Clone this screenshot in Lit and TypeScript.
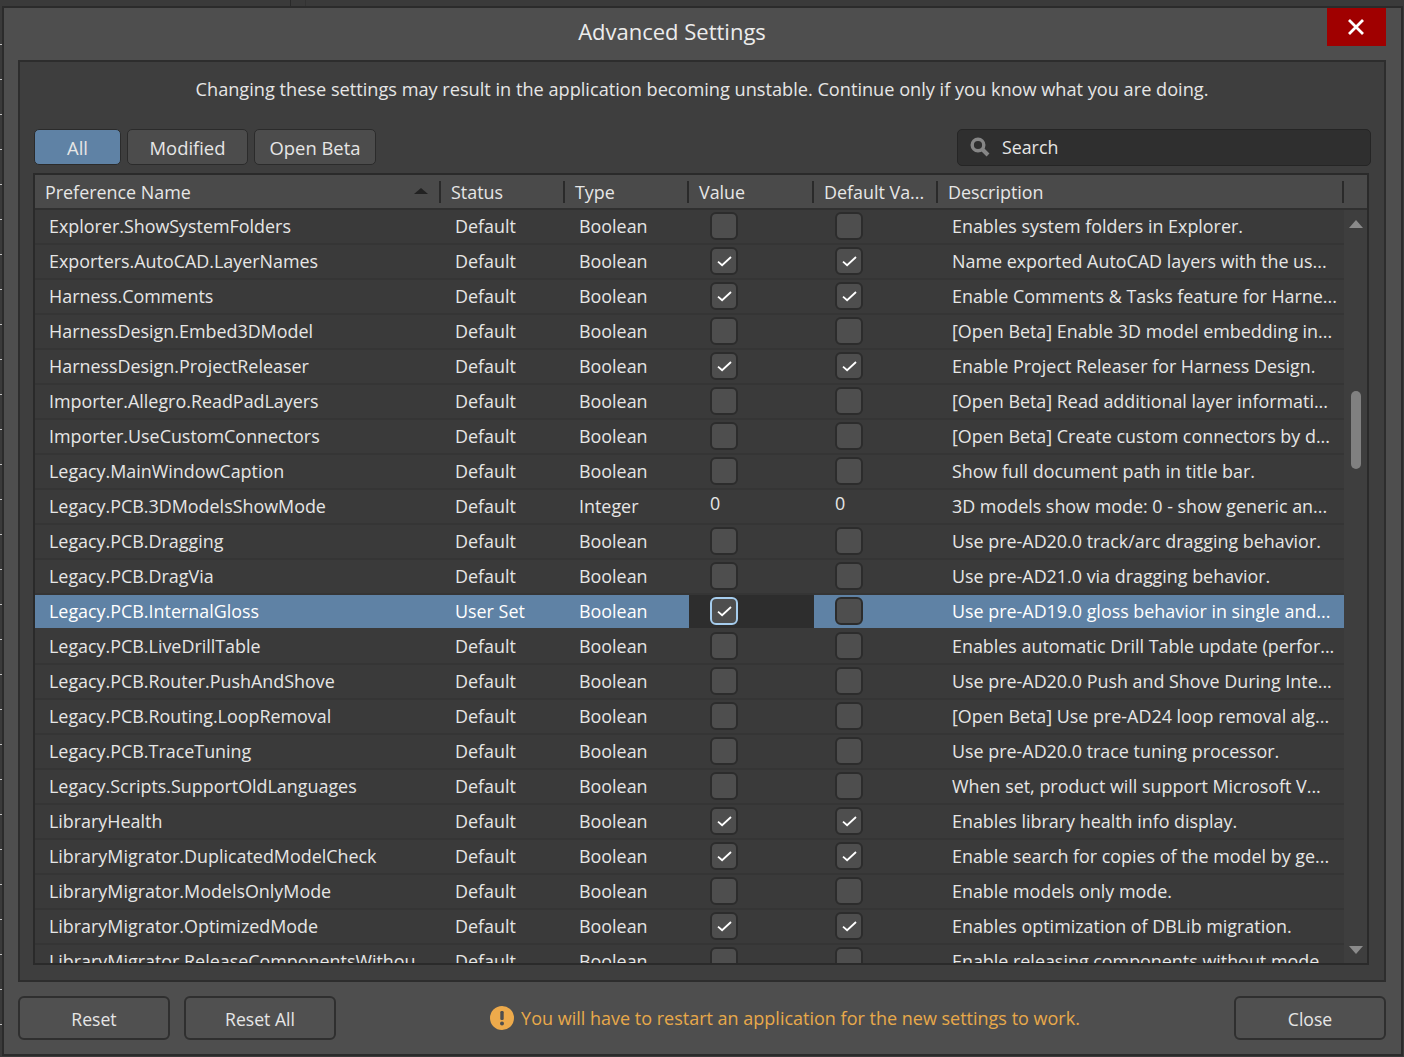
import { LitElement, html, css, svg } from "lit";
import { customElement } from "lit/decorators.js";

type Row = [string, string, string, string, string];
const B = "Boolean";
const rows: Row[] = [
  ["Explorer.ShowSystemFolders", "Default", B, "0", "Enables system folders in Explorer."],
  ["Exporters.AutoCAD.LayerNames", "Default", B, "1", "Name exported AutoCAD layers with the us..."],
  ["Harness.Comments", "Default", B, "1", "Enable Comments & Tasks feature for Harne..."],
  ["HarnessDesign.Embed3DModel", "Default", B, "0", "[Open Beta] Enable 3D model embedding in..."],
  ["HarnessDesign.ProjectReleaser", "Default", B, "1", "Enable Project Releaser for Harness Design."],
  ["Importer.Allegro.ReadPadLayers", "Default", B, "0", "[Open Beta] Read additional layer informati..."],
  ["Importer.UseCustomConnectors", "Default", B, "0", "[Open Beta] Create custom connectors by d..."],
  ["Legacy.MainWindowCaption", "Default", B, "0", "Show full document path in title bar."],
  ["Legacy.PCB.3DModelsShowMode", "Default", "Integer", "n", "3D models show mode: 0 - show generic an..."],
  ["Legacy.PCB.Dragging", "Default", B, "0", "Use pre-AD20.0 track/arc dragging behavior."],
  ["Legacy.PCB.DragVia", "Default", B, "0", "Use pre-AD21.0 via dragging behavior."],
  ["Legacy.PCB.InternalGloss", "User Set", B, "s", "Use pre-AD19.0 gloss behavior in single and..."],
  ["Legacy.PCB.LiveDrillTable", "Default", B, "0", "Enables automatic Drill Table update (perfor..."],
  ["Legacy.PCB.Router.PushAndShove", "Default", B, "0", "Use pre-AD20.0 Push and Shove During Inte..."],
  ["Legacy.PCB.Routing.LoopRemoval", "Default", B, "0", "[Open Beta] Use pre-AD24 loop removal alg..."],
  ["Legacy.PCB.TraceTuning", "Default", B, "0", "Use pre-AD20.0 trace tuning processor."],
  ["Legacy.Scripts.SupportOldLanguages", "Default", B, "0", "When set, product will support Microsoft V..."],
  ["LibraryHealth", "Default", B, "1", "Enables library health info display."],
  ["LibraryMigrator.DuplicatedModelCheck", "Default", B, "1", "Enable search for copies of the model by ge..."],
  ["LibraryMigrator.ModelsOnlyMode", "Default", B, "0", "Enable models only mode."],
  ["LibraryMigrator.OptimizedMode", "Default", B, "1", "Enables optimization of DBLib migration."],
  ["LibraryMigrator.ReleaseComponentsWithou", "Default", B, "0", "Enable releasing components without mode..."],
];

const check = svg`<svg class="tick" width="15" height="11" viewBox="0 0 15 11"><path d="M1 5.6 L5.1 9.2 L14 1" fill="none" stroke="#fff" stroke-width="1.8"/></svg>`;

@customElement("app-root")
export class AppRoot extends LitElement {
  static styles = css`
    :host { display: block; height: 1057px; overflow: hidden; background: #3a3a3a; font-family: "Open Sans", "Noto Sans", sans-serif; font-size: 17.9px; color: #e6e6e6; }
    * { box-sizing: border-box; }
    .screen { height: 1057px; padding: 6px 1px 1px 2px; background:
      linear-gradient(to right, transparent 290px, #2a2a2a 290px, #2a2a2a 291px, transparent 291px, transparent 305px, #333 305px, #333 306px, transparent 306px) top / 100% 6px no-repeat,
      repeating-linear-gradient(to bottom, transparent 0, transparent 34px, #c4c4c4 34px, #c4c4c4 35px) left 0 top 10px / 2px 100% no-repeat; }
    .dialog { height: 1050px; background: #4e4e4e; border: 2px solid #2b2b2b; padding: 0 15px 0 14px; display: flex; flex-direction: column; position: relative; }
    .title { height: 52px; flex: none; display: flex; align-items: center; justify-content: center; font-size: 22px; color: #ececec; padding: 0 60px 7px 0; }
    .close { position: absolute; top: 0; right: 15px; width: 59px; height: 38px; background: #a00000; display: flex; align-items: center; justify-content: center; padding-right: 2px; }
    .panel { flex: none; height: 922px; background: #3e3e3e; border: 2px solid #2d2d2d; padding: 0 13px 0 13px; display: flex; flex-direction: column; }
    .warn { height: 56px; flex: none; display: flex; align-items: center; justify-content: center; padding-bottom: 2px; font-size: 18.17px; }
    .bar { height: 55px; flex: none; display: flex; gap: 6px; padding: 11px 0 0 1px; align-items: flex-start; }
    .tab { height: 36px; border: 1px solid #2b2b2b; border-radius: 5px; background: #4c4c4c; display: flex; align-items: center; justify-content: center; font-size: 18.4px; padding-top: 1px; }
    .tab.on { background: #5f82a5; }
    .search { margin-left: auto; width: 414px; height: 37px; background: #2f2f2f; border: 1px solid #252525; border-radius: 5px; display: flex; align-items: center; gap: 12px; padding: 0 12px 2px; font-size: 17.8px; }
    .table { flex: none; width: 1336px; height: 792px; border: 2px solid #2a2a2a; display: flex; flex-direction: column; overflow: hidden; background: #3e3e3e; }
    .head { flex: none; height: 35px; background: #4a4a4a; border-bottom: 2px solid #303030; display: grid; grid-template-columns: 406px 124px 124px 125px 124px 406px 1fr; align-items: center; }
    .hc { height: 22px; display: flex; align-items: center; padding-left: 10px; border-right: 2px solid #2a2a2a; position: relative; white-space: nowrap; overflow: hidden; }
    .hc.last { border-right: none; }
    .sort { position: absolute; right: 11px; top: 7px; width: 0; height: 0; border-left: 7px solid transparent; border-right: 7px solid transparent; border-bottom: 6px solid #222; }
    .main { flex: 1; min-height: 0; display: flex; }
    .rows { width: 1309px; flex: none; overflow: hidden; }
    .row { height: 35px; display: grid; grid-template-columns: 406px 124px 124px 125px 124px 406px; align-items: start; border-bottom: 2px solid #353535; background: #3a3a3a; }
    .row.sel { background: #5f82a5; color: #fff; border-bottom: 2px solid #3a3a3a; }
    .c { padding: 0 0 2px 14px; white-space: nowrap; overflow: hidden; height: 33px; display: flex; align-items: center; }
    .c.box { padding: 0 0 1px 21px; }
    .c.num { align-items: flex-start; padding-top: 1px; }
    .c.focus { background: #2d2d2d; }
    .cb { width: 28px; height: 28px; border: 2px solid #2c2c2c; border-radius: 6px; background: #4e4e4e; display: flex; align-items: center; justify-content: center; }
    .cb.f { border-color: #a6cdee; }
    .sb { flex: 1; display: flex; flex-direction: column; align-items: center; padding: 10px 0 9px 1px; }
    .up { width: 0; height: 0; border-left: 7px solid transparent; border-right: 7px solid transparent; border-bottom: 8px solid #8b8b8b; }
    .dn { width: 0; height: 0; border-left: 7px solid transparent; border-right: 7px solid transparent; border-top: 8px solid #8b8b8b; }
    .track { flex: 1; display: flex; flex-direction: column; padding-top: 163px; }
    .thumb { width: 10px; height: 78px; border-radius: 5px; background: #808080; }
    .foot { flex: 1; display: flex; align-items: center; gap: 14px; }
    .btn { width: 152px; height: 44px; border: 2px solid #2f2f2f; border-radius: 6px; background: #505050; display: flex; align-items: center; justify-content: center; font-size: 17.6px; padding-top: 2px; }
    .msg { flex: 1; display: flex; align-items: center; justify-content: center; gap: 7px; color: #e8a94a; font-size: 18px; }
  `;

  private cell(v: string, focus = false) {
    return html`<div class="cb ${focus ? "f" : ""}">${v === "1" ? check : ""}</div>`;
  }

  render() {
    return html`<div class="screen"><div class="dialog">
      <div class="title">Advanced Settings</div>
      <div class="close"><svg width="18" height="18" viewBox="0 0 18 18"><path d="M2 2 L16 16 M16 2 L2 16" stroke="#fff" stroke-width="2.8"/></svg></div>
      <div class="panel">
        <div class="warn">Changing these settings may result in the application becoming unstable. Continue only if you know what you are doing.</div>
        <div class="bar">
          <div class="tab on" style="width:87px">All</div>
          <div class="tab" style="width:121px">Modified</div>
          <div class="tab" style="width:122px">Open Beta</div>
          <div class="search">
            <svg width="20" height="20" viewBox="0 0 20 20"><circle cx="8" cy="8" r="5.8" fill="none" stroke="#868686" stroke-width="3.4"/><path d="M12.5 12.5 L18 18" stroke="#868686" stroke-width="4"/></svg>
            <span>Search</span>
          </div>
        </div>
        <div class="table">
          <div class="head">
            <div class="hc">Preference Name<span class="sort"></span></div>
            <div class="hc">Status</div><div class="hc">Type</div><div class="hc">Value</div>
            <div class="hc">Default Va...</div><div class="hc">Description</div><div class="hc last"></div>
          </div>
          <div class="main">
            <div class="rows">${rows.map((r) => {
              const sel = r[3] === "s";
              const n = r[3] === "n";
              return html`<div class="row ${sel ? "sel" : ""}">
                <div class="c">${r[0]}</div><div class="c">${r[1]}</div><div class="c">${r[2]}</div>
                ${n ? html`<div class="c box num">0</div><div class="c box num">0</div>` : html`
                  <div class="c box ${sel ? "focus" : ""}">${this.cell(sel ? "1" : r[3], sel)}</div>
                  <div class="c box">${this.cell(sel ? "0" : r[3])}</div>`}
                <div class="c">${r[4]}</div>
              </div>`;
            })}</div>
            <div class="sb"><div class="up"></div><div class="track"><div class="thumb"></div></div><div class="dn"></div></div>
          </div>
        </div>
      </div>
      <div class="foot">
        <div class="btn">Reset</div><div class="btn">Reset All</div>
        <div class="msg">
          <svg width="24" height="24" viewBox="0 0 24 24"><circle cx="12" cy="12" r="12" fill="#edaa4b"/><rect x="10.3" y="5" width="3.4" height="9" rx="1.2" fill="#4e4e4e"/><circle cx="12" cy="17.5" r="2" fill="#4e4e4e"/></svg>
          <span>You will have to restart an application for the new settings to work.</span>
        </div>
        <div class="btn">Close</div>
      </div>
    </div></div>`;
  }
}
